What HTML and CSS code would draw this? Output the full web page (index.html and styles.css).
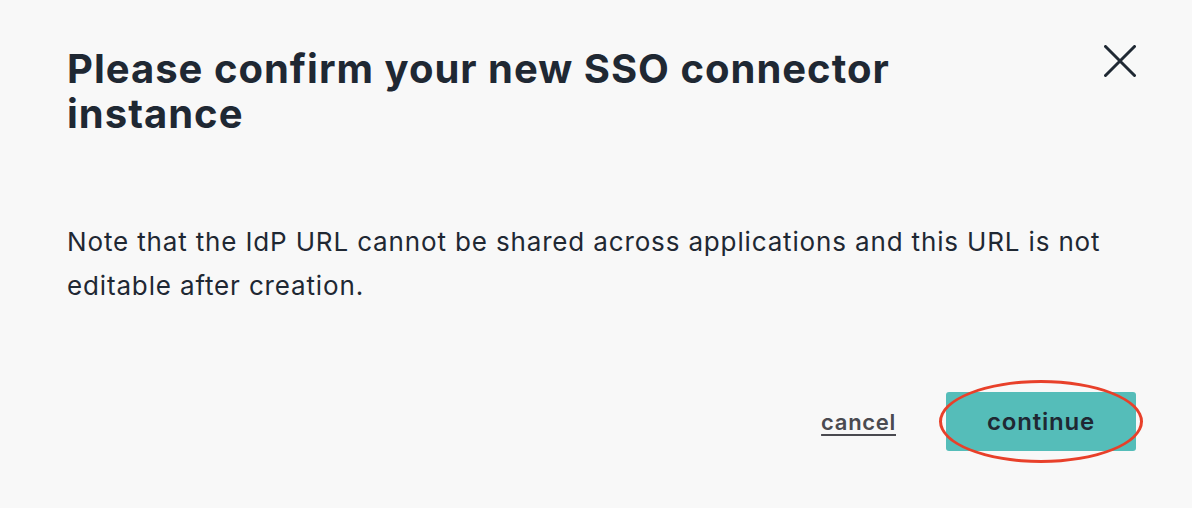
FILE: index.html
```html
<!DOCTYPE html>
<html>
<head>
<meta charset="utf-8">
<link rel="stylesheet" href="styles.css">
</head>
<body>
<div class="modal">
  <div class="header">
    <h1 class="title">Please confirm your new SSO connector instance</h1>
    <button class="close" aria-label="close">
      <svg width="32" height="32" viewBox="0 0 32 32"><path d="M1.5 1.5 L30.5 30.5 M30.5 1.5 L1.5 30.5" stroke="#1f2833" stroke-width="3" stroke-linecap="round" fill="none"/></svg>
    </button>
  </div>
  <p class="body">Note that the IdP URL cannot be shared across applications and this URL is not editable after creation.</p>
  <div class="footer">
    <a class="cancel" href="#">cancel</a>
    <div class="btnwrap">
      <button class="continue">continue</button>
      <span class="ring"></span>
    </div>
  </div>
</div>
</body>
</html>
```
FILE: styles.css
```css
* { box-sizing: border-box; }
html, body { margin: 0; padding: 0; }
body {
  background: #f8f8f8;
  font-family: Inter, "Noto Sans", sans-serif;
  color: #1f2833;
  width: 1192px;
  height: 508px;
  overflow: hidden;
}
.modal {
  padding: 46px 56px 0 67px;
}
.header {
  display: flex;
  justify-content: space-between;
  align-items: flex-start;
}
.title {
  margin: 0;
  font-size: 40px;
  font-weight: 700;
  line-height: 45px;
  letter-spacing: 1px;
  width: 880px;
}
.close {
  background: none;
  border: none;
  padding: 0;
  margin-top: -1px;
  width: 32px;
  height: 32px;
  display: block;
  cursor: pointer;
}
.close svg { display: block; }
.body {
  margin: 83.5px 0 0 0;
  font-size: 26px;
  line-height: 44px;
  letter-spacing: 0.85px;
  width: 1060px;
}
.footer {
  display: flex;
  justify-content: flex-end;
  align-items: center;
  margin-top: 84.5px;
}
.cancel {
  color: #4a4a50;
  font-size: 22px;
  font-weight: 600;
  letter-spacing: 0.7px;
  text-decoration: underline;
  text-decoration-thickness: 2px;
  text-underline-offset: 4px;
  margin-right: 50px;
}
.btnwrap {
  position: relative;
}
.continue {
  display: block;
  width: 190px;
  height: 59px;
  background: #55bdb9;
  border: none;
  border-radius: 3px;
  font-family: Inter, sans-serif;
  font-size: 24px;
  font-weight: 600;
  letter-spacing: 0.8px;
  color: #1f2833;
  padding: 0;
}
.ring {
  position: absolute;
  left: -7px;
  top: -12px;
  width: 204px;
  height: 83px;
  border: 3.5px solid #e8402a;
  border-radius: 50%;
}
```
